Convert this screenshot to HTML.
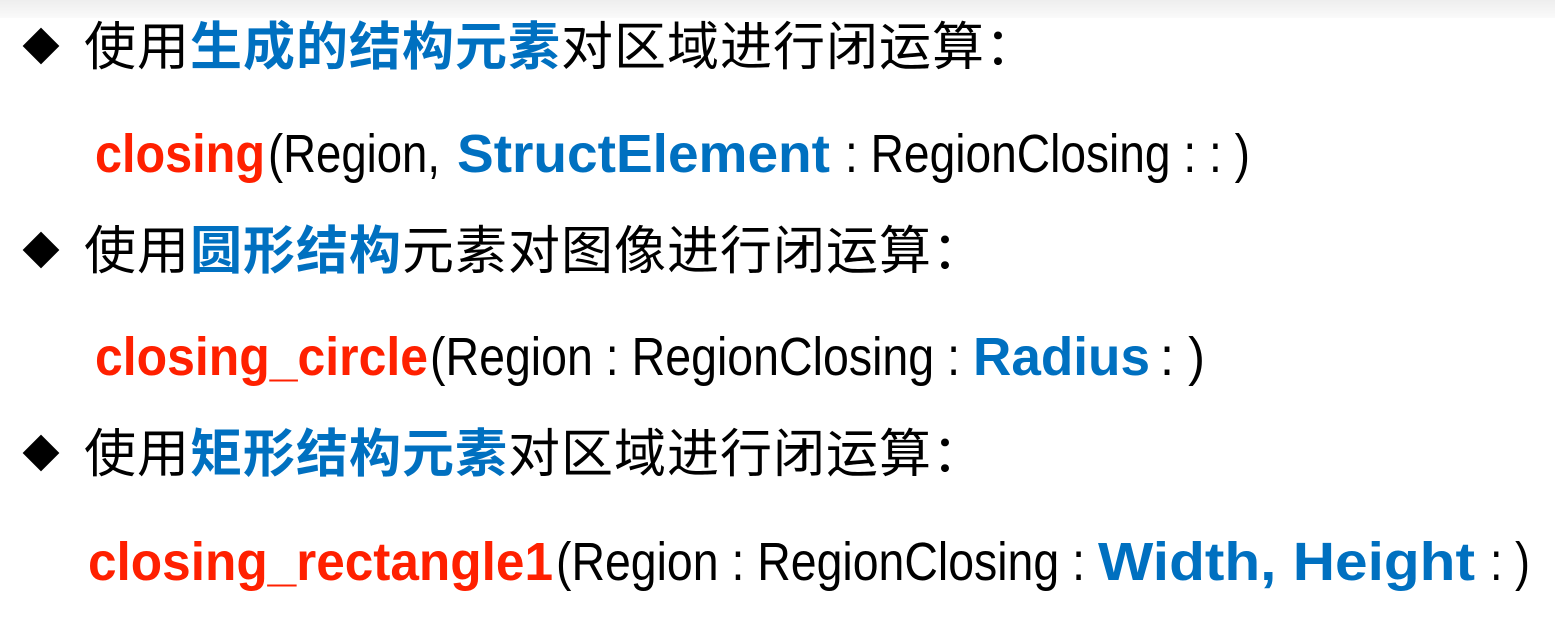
<!DOCTYPE html>
<html><head><meta charset="utf-8"><style>
html,body{margin:0;padding:0;background:#fff;width:1555px;height:618px;overflow:hidden;position:relative}
.band{position:absolute;left:0;top:0;width:1555px;height:18px;background:linear-gradient(#eeeeee,#fafafa)}
.l{position:absolute;white-space:nowrap;line-height:1}
.cj{font-family:"Liberation Sans","Noto Sans CJK SC",sans-serif;font-size:52px;color:#000}
.b{color:#0070c0;font-weight:bold}
.dia{position:absolute;width:26px;height:26px;background:#000;transform:rotate(45deg)}
svg{position:absolute;left:0;top:0}
svg text{font-family:"Liberation Sans",sans-serif;font-size:54px}
.R{fill:#ff2000;font-weight:bold}
.B{fill:#0070c0;font-weight:bold}
.K{fill:#000}
</style></head><body>
<div class="band"></div>

<div class="dia" style="left:28px;top:33px"></div>
<div class="l cj" style="left:84px;top:22px;letter-spacing:1px">使用<span class="b">生成的结构元素</span>对区域进行闭运算：</div>
<div class="dia" style="left:28px;top:237px"></div>
<div class="l cj" style="left:84px;top:226px;letter-spacing:1px">使用<span class="b">圆形结构</span>元素对图像进行闭运算：</div>
<div class="dia" style="left:28px;top:440px"></div>
<div class="l cj" style="left:84px;top:429px;letter-spacing:1px">使用<span class="b">矩形结构元素</span>对区域进行闭运算：</div>

<svg width="1555" height="618">
<text class="R" x="95" y="172" textLength="170" lengthAdjust="spacingAndGlyphs">closing</text>
<text class="K" x="268" y="172" textLength="172" lengthAdjust="spacingAndGlyphs">(Region,</text>
<text class="B" x="457" y="172" textLength="373" lengthAdjust="spacingAndGlyphs">StructElement</text>
<text class="K" x="845" y="172" textLength="405" lengthAdjust="spacingAndGlyphs">: RegionClosing : : )</text>

<text class="R" x="95" y="375" textLength="333" lengthAdjust="spacingAndGlyphs">closing_circle</text>
<text class="K" x="430" y="375" textLength="530" lengthAdjust="spacingAndGlyphs">(Region : RegionClosing :</text>
<text class="B" x="973" y="375" textLength="177" lengthAdjust="spacingAndGlyphs">Radius</text>
<text class="K" x="1160" y="375" textLength="45" lengthAdjust="spacingAndGlyphs">: )</text>

<text class="R" x="88" y="580" textLength="465" lengthAdjust="spacingAndGlyphs">closing_rectangle1</text>
<text class="K" x="556" y="580" textLength="529" lengthAdjust="spacingAndGlyphs">(Region : RegionClosing :</text>
<text class="B" x="1098" y="580" textLength="377" lengthAdjust="spacingAndGlyphs">Width, Height</text>
<text class="K" x="1490" y="580" textLength="40" lengthAdjust="spacingAndGlyphs">: )</text>
</svg>
</body></html>
